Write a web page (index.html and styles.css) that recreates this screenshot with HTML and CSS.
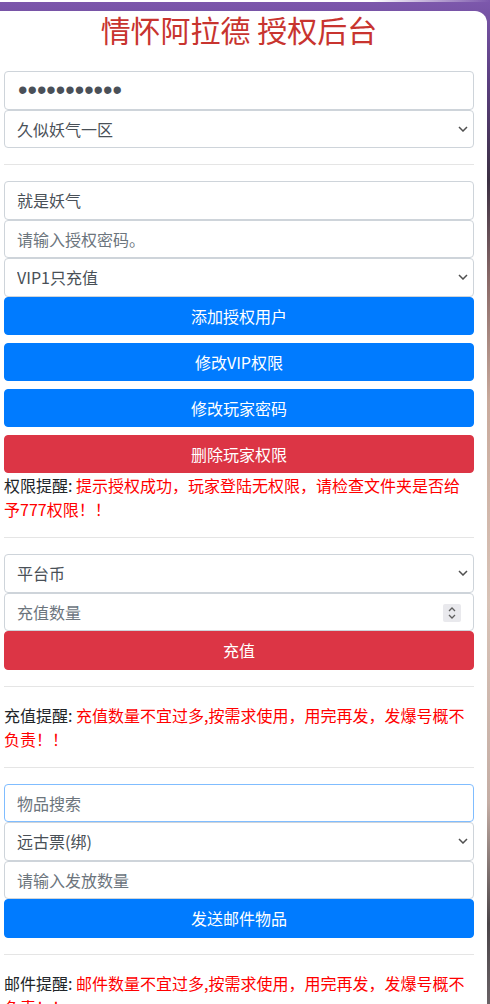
FILE: index.html
```html
<!DOCTYPE html>
<html lang="zh-CN">

<head>
    <meta charset="UTF-8">
    <meta name="viewport" content="width=device-width, initial-scale=1.0">
    <title>情怀阿拉德 授权后台</title>
    <link rel="stylesheet" href="styles.css">
</head>

<body>
    <div class="panel">
        <h2 class="title">情怀阿拉德 授权后台</h2>

        <div class="stack">
            <input type="password" class="field field-secret" value="12345678901">
            <div class="select-wrap">
                <select class="field">
                    <option>久似妖气一区</option>
                </select>
                <svg class="caret" width="10" height="6" viewBox="0 0 10 6"><path d="M1 1 5 5 9 1" fill="none" stroke="#505050" stroke-width="1.5"/></svg>
            </div>
        </div>

        <hr>

        <div class="stack">
            <input type="text" class="field" value="就是妖气">
            <input type="text" class="field" placeholder="请输入授权密码。">
            <div class="select-wrap">
                <select class="field">
                    <option>VIP1只充值</option>
                </select>
                <svg class="caret" width="10" height="6" viewBox="0 0 10 6"><path d="M1 1 5 5 9 1" fill="none" stroke="#505050" stroke-width="1.5"/></svg>
            </div>
            <button class="btn btn-primary">添加授权用户</button>
            <button class="btn btn-primary spaced">修改VIP权限</button>
            <button class="btn btn-primary spaced">修改玩家密码</button>
            <button class="btn btn-danger spaced">删除玩家权限</button>
        </div>
        <p class="notice"><span class="notice-label">权限提醒: </span>提示授权成功，玩家登陆无权限，请检查文件夹是否给予777权限！！</p>

        <hr>

        <div class="stack">
            <div class="select-wrap">
                <select class="field">
                    <option>平台币</option>
                </select>
                <svg class="caret" width="10" height="6" viewBox="0 0 10 6"><path d="M1 1 5 5 9 1" fill="none" stroke="#505050" stroke-width="1.5"/></svg>
            </div>
            <div class="num-wrap">
                <input type="number" class="field" placeholder="充值数量">
                <span class="spin">
                    <svg width="18" height="18" viewBox="0 0 18 18">
                        <path d="M6 7 9 4 12 7" fill="none" stroke="#5f5f5f" stroke-width="1.3"/>
                        <path d="M6 11 9 14 12 11" fill="none" stroke="#5f5f5f" stroke-width="1.3"/>
                    </svg>
                </span>
            </div>
            <button class="btn btn-danger">充值</button>
        </div>

        <hr>
        <p class="notice"><span class="notice-label">充值提醒: </span>充值数量不宜过多,按需求使用，用完再发，发爆号概不负责！！</p>
        <hr>

        <div class="stack">
            <input type="text" class="field focused" placeholder="物品搜索">
            <div class="select-wrap">
                <select class="field">
                    <option>远古票(绑)</option>
                </select>
                <svg class="caret" width="10" height="6" viewBox="0 0 10 6"><path d="M1 1 5 5 9 1" fill="none" stroke="#505050" stroke-width="1.5"/></svg>
            </div>
            <input type="text" class="field" placeholder="请输入发放数量">
            <button class="btn btn-primary">发送邮件物品</button>
        </div>

        <hr>
        <p class="notice"><span class="notice-label">邮件提醒: </span>邮件数量不宜过多,按需求使用，用完再发，发爆号概不负责！！</p>
    </div>
</body>

</html>
```

FILE: styles.css
```css
html, body {
    height: 100%;
}

body {
    margin: 0;
    font-family: "Noto Sans CJK SC", "Liberation Sans", sans-serif;
    font-size: 16px;
    line-height: 1.5;
    color: #212529;
    background:
        linear-gradient(90deg, #ffffff 76%, rgba(255, 255, 255, 0) 100%) top / 100% 2px no-repeat,
        linear-gradient(180deg, #7d58ad 0%, #5b3f80 8%, #3b2f42 18%, #8a6a68 28%, #c9aa9c 40%, #d8c2b6 60%, #c4ada4 80%, #4a4448 92%, #6a6266 100%);
}

.panel {
    width: 487px;
    min-height: 100%;
    box-sizing: border-box;
    margin-top: 1px;
    padding: 0 13px 0 4px;
    background-color: #fff;
    border-top-right-radius: 12px;
}

.title {
    margin: 11px 0 24px;
    font-size: 30px;
    font-weight: 400;
    line-height: 36px;
    text-align: center;
    color: #c8342f;
}

.stack {
    display: flex;
    flex-direction: column;
}

.field {
    display: block;
    width: 100%;
    height: 38.5px;
    box-sizing: border-box;
    margin: 0;
    padding: 6px 12px;
    font-family: inherit;
    font-size: 16px;
    color: #495057;
    background-color: #fff;
    border: 1px solid #ced4da;
    border-radius: 4px;
    outline: none;
}

.field::placeholder {
    color: #6c757d;
    opacity: 1;
}

.field.focused {
    border-color: #80bdff;
}

/* password dots: Arial-width bullets, drawn large */
.field-secret {
    padding: 0 12px 0 13px;
    font-family: "Liberation Sans", sans-serif;
    font-size: 27px;
    color: #4a5058;
}

select.field {
    -webkit-appearance: none;
    appearance: none;
    padding-right: 30px;
}

.select-wrap {
    position: relative;
}

.caret {
    position: absolute;
    top: 16px;
    right: 6px;
    pointer-events: none;
}

input[type="number"]::-webkit-inner-spin-button,
input[type="number"]::-webkit-outer-spin-button {
    -webkit-appearance: none;
    margin: 0;
}

.num-wrap {
    position: relative;
}

.spin {
    position: absolute;
    top: 11px;
    right: 13px;
    width: 18px;
    height: 18px;
    background-color: #e9e9ed;
    border-radius: 2px;
}

.spin svg {
    display: block;
}

.btn {
    display: block;
    width: 100%;
    height: 38.5px;
    margin: 0;
    padding: 6px 12px;
    font-family: inherit;
    font-size: 16px;
    line-height: 24px;
    color: #fff;
    border: 1px solid transparent;
    border-radius: 4px;
    cursor: pointer;
}

.btn.spaced {
    margin-top: 7.5px;
}

.btn-primary {
    background-color: #007bff;
    border-color: #007bff;
}

.btn-danger {
    background-color: #dc3545;
    border-color: #dc3545;
}

.notice {
    margin: 0;
    line-height: 24px;
    color: #f00;
}

.notice-label {
    color: #212529;
}

hr {
    margin: 16px 0;
    border: 0;
    border-top: 1px solid rgba(0, 0, 0, 0.1);
}
```
